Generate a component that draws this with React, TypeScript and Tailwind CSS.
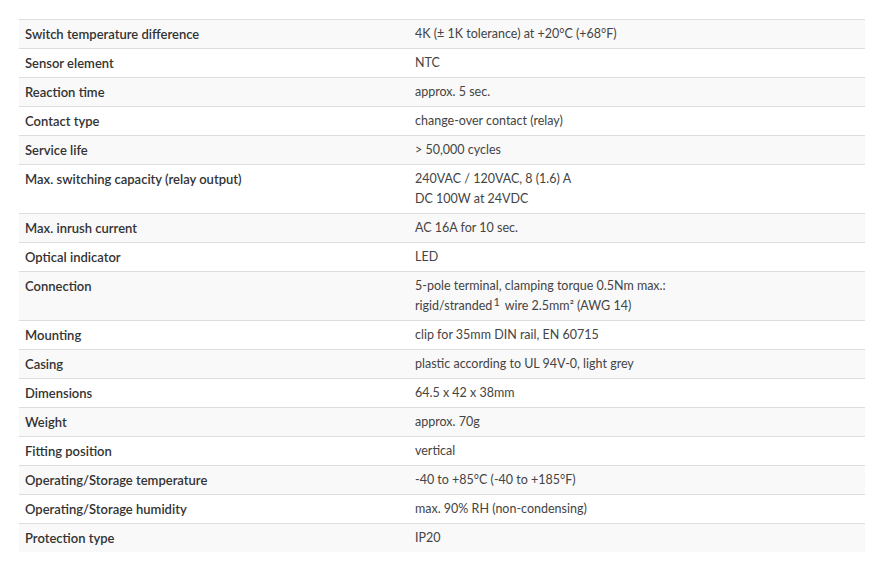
import React from 'react';

type Spec = { label: string; value: React.ReactNode };

const specs: Spec[] = [
  { label: 'Switch temperature difference', value: '4K (± 1K tolerance) at +20°C (+68°F)' },
  { label: 'Sensor element', value: 'NTC' },
  { label: 'Reaction time', value: 'approx. 5 sec.' },
  { label: 'Contact type', value: 'change-over contact (relay)' },
  { label: 'Service life', value: '> 50,000 cycles' },
  {
    label: 'Max. switching capacity (relay output)',
    value: (
      <>
        240VAC / 120VAC, 8 (1.6) A<br />
        DC 100W at 24VDC
      </>
    ),
  },
  { label: 'Max. inrush current', value: 'AC 16A for 10 sec.' },
  { label: 'Optical indicator', value: 'LED' },
  {
    label: 'Connection',
    value: (
      <>
        5-pole terminal, clamping torque 0.5Nm max.:<br />
        rigid/stranded<sup className="text-[11px] relative -top-[4px] ml-[1px] mr-[2px]">1</sup> wire 2.5mm² (AWG 14)
      </>
    ),
  },
  { label: 'Mounting', value: 'clip for 35mm DIN rail, EN 60715' },
  { label: 'Casing', value: 'plastic according to UL 94V-0, light grey' },
  { label: 'Dimensions', value: '64.5 x 42 x 38mm' },
  { label: 'Weight', value: 'approx. 70g' },
  { label: 'Fitting position', value: 'vertical' },
  { label: 'Operating/Storage temperature', value: '-40 to +85°C (-40 to +185°F)' },
  { label: 'Operating/Storage humidity', value: 'max. 90% RH (non-condensing)' },
  { label: 'Protection type', value: 'IP20' },
];

export default function App() {
  return (
    <div className="w-[874px] h-[570px] bg-white pt-[19px] pl-[19px] pr-[9px] font-['Lato',sans-serif] text-[13px] leading-[20px] text-[#333]">
      <table className="w-[846px] border-collapse">
        <tbody>
          {specs.map((s, i) => (
            <tr key={i} className={`border-t border-[#ddd] ${i % 2 === 0 ? 'bg-[#f9f9f9]' : 'bg-white'}`}>
              <td className="w-[390px] align-top px-[6px] py-[4px] font-semibold text-[#333]">{s.label}</td>
              <td className="align-top px-[6px] py-[4px] text-[12.5px] text-[#444]">{s.value}</td>
            </tr>
          ))}
        </tbody>
      </table>
    </div>
  );
}
